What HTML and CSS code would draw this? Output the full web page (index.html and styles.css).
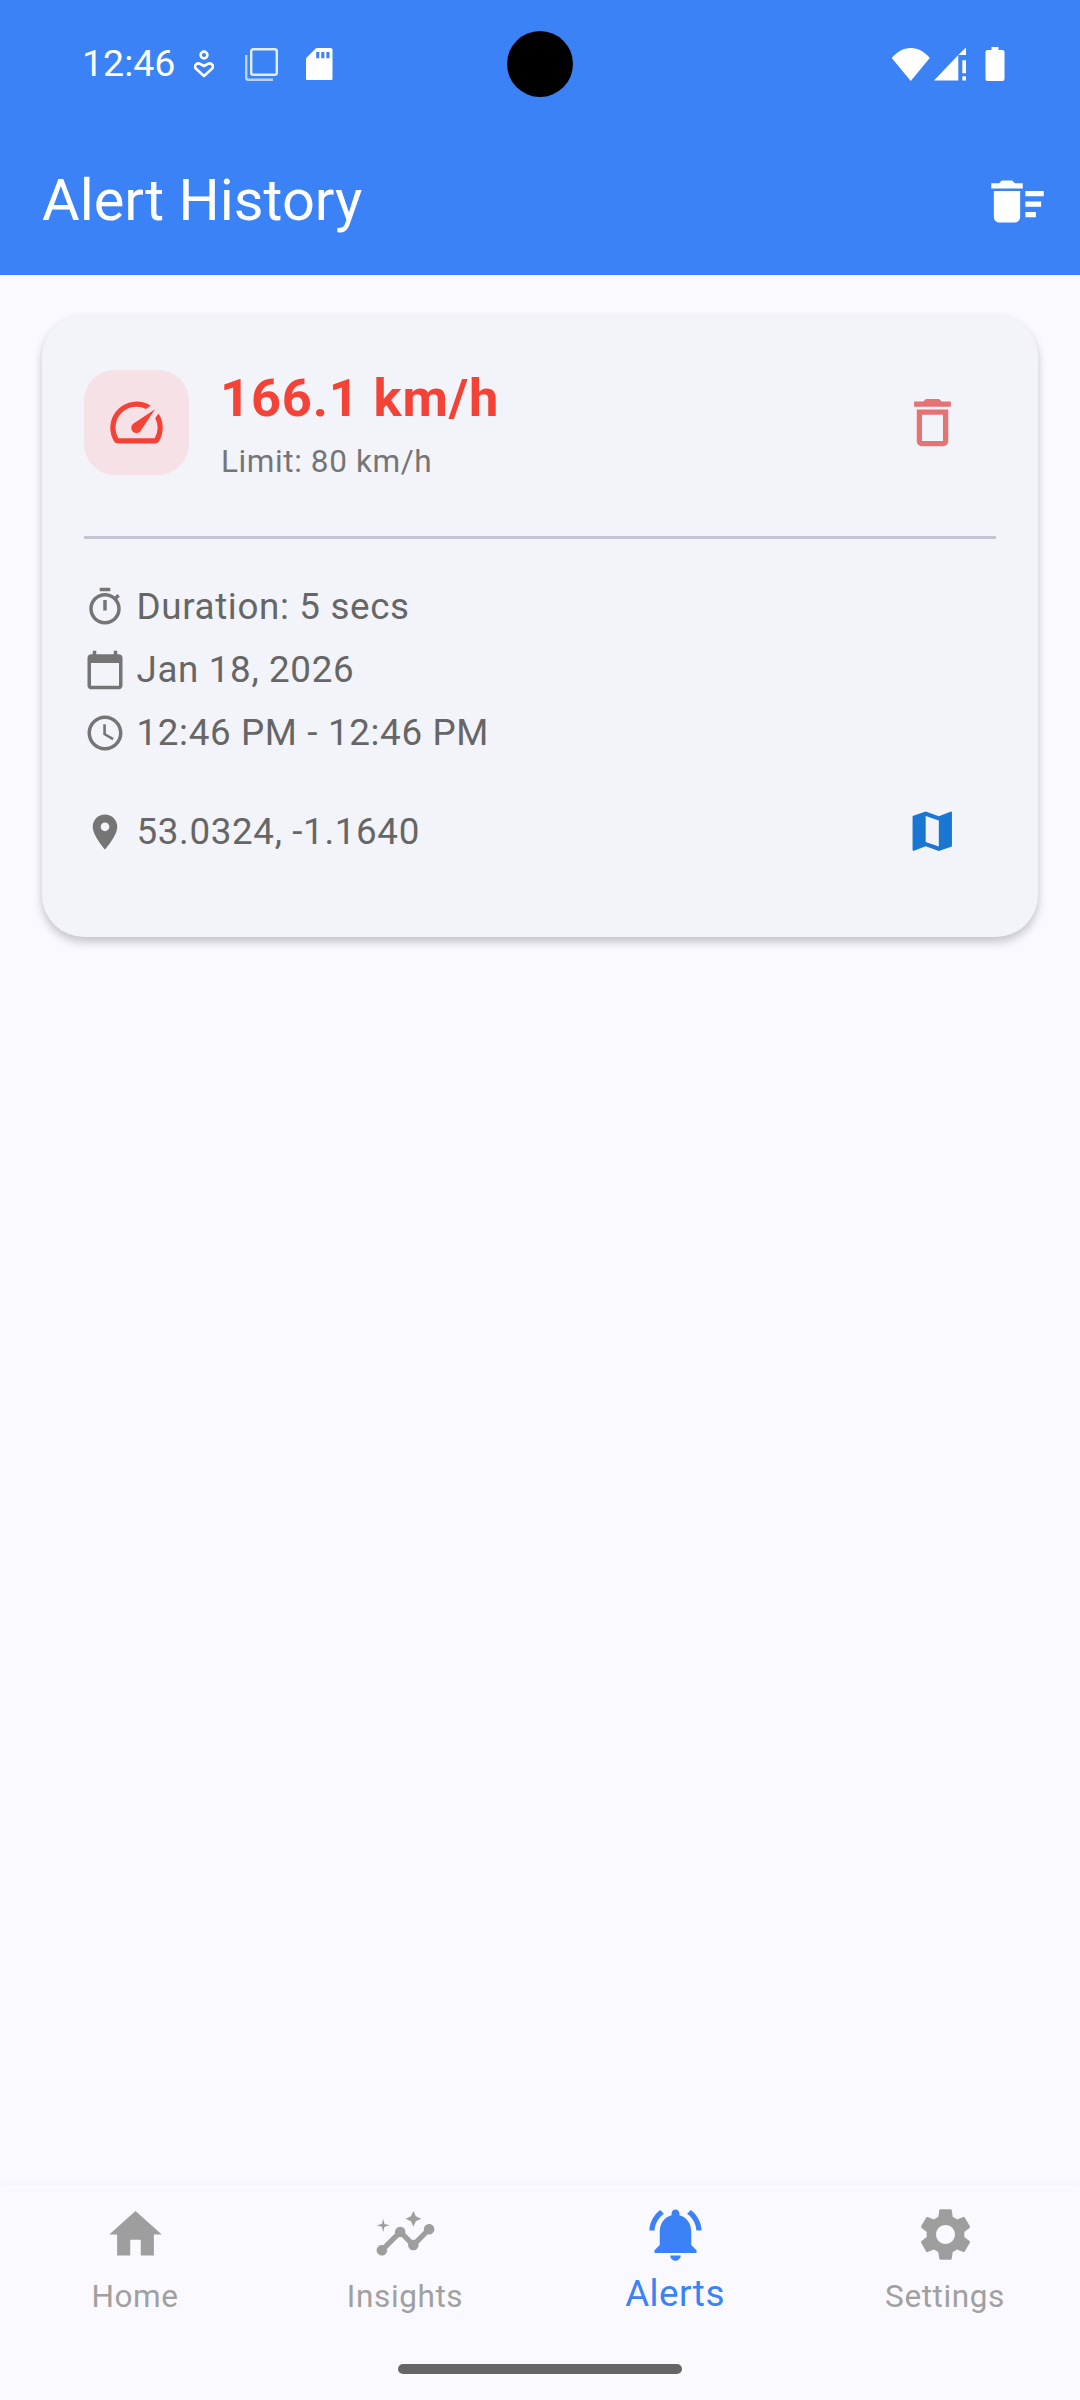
FILE: index.html
```html
<!DOCTYPE html>
<html lang="en">
<head>
<meta charset="utf-8">
<title>Alert History</title>
<link rel="stylesheet" href="styles.css">
</head>
<body>
<div class="screen">
  <header class="header">
    <div class="status">
      <span class="clock">12:46</span>
      <svg class="st st-pin" viewBox="0 0 20 28"><circle cx="10" cy="5" r="3.4" fill="none" stroke="#fff" stroke-width="2.600"/><path d="M10 26 1.800 18.500c-2-2.200.6-6 3.800-4.800L10 16l4.400-2.300c3.200-1.200 5.800 2.600 3.800 4.800z" fill="none" stroke="#fff" stroke-width="2.600" stroke-linejoin="round"/></svg>
      <svg class="st st-copy" viewBox="0 0 33 33"><rect x="6.2" y="1.2" width="25.600" height="25.600" rx="2" fill="none" stroke="#fff" stroke-opacity=".85" stroke-width="2.400"/><path d="M1.200 7v22.800a2 2 0 0 0 2 2H28" fill="none" stroke="#fff" stroke-opacity=".65" stroke-width="2.400"/></svg>
      <svg class="st st-sd" viewBox="0 0 26 32"><path d="M10 0h14a2 2 0 0 1 2 2v28a2 2 0 0 1-2 2H2a2 2 0 0 1-2-2V10z" fill="#fff"/><path d="M10 4h3v6h-3zM15 4h3v6h-3zM20 4h3v6h-3z" fill="#3b82f6"/></svg>
      <span class="status-fill"></span>
      <svg class="st st-wifi" viewBox="0 0 38 33"><path d="M19 33 0 10C5 4 11.500 0 19 0s14 4 19 10z" fill="#fff"/></svg>
      <svg class="st st-signal" viewBox="0 0 32 33"><path d="M24 8v25H0z M32 0v8h-8z" fill="#fff"/><path d="M28 13h4v13h-4zM28 29h4v4h-4z" fill="#fff"/></svg>
      <svg class="st st-batt" viewBox="0 0 19 34"><path d="M6 0h7v3h4a2 2 0 0 1 2 2v27a2 2 0 0 1-2 2H2a2 2 0 0 1-2-2V5a2 2 0 0 1 2-2h4z" fill="#fff"/></svg>
    </div>
    <div class="appbar">
      <h1 class="title">Alert History</h1>
      <svg class="bar-action" viewBox="0 0 24 24"><path d="M15 16h4v2h-4zm0-8h7v2h-7zm0 4h6v2h-6zM3 18c0 1.100.9 2 2 2h6c1.100 0 2-.9 2-2V8H3v10zM14 5h-3l-1-1H6L5 5H2v2h12z"/></svg>
    </div>
    <div class="camera"></div>
  </header>

  <main class="main">
    <section class="card">
      <div class="card-top">
        <div class="speed-box">
          <svg class="speed-icon" viewBox="0 0 24 24"><path d="M20.380 8.570l-1.230 1.850a8 8 0 0 1-.22 7.580H5.070A8 8 0 0 1 15.580 6.850l1.850-1.230A10 10 0 0 0 3.350 19a2 2 0 0 0 1.720 1h13.850a2 2 0 0 0 1.740-1 10 10 0 0 0-.27-10.440zm-9.790 6.840a2 2 0 0 0 2.830 0l5.660-8.490-8.490 5.660a2 2 0 0 0 0 2.830z"/></svg>
        </div>
        <div class="speed-text">
          <div class="speed">166.1 km/h</div>
          <div class="limit">Limit: 80 km/h</div>
        </div>
        <div class="btn">
          <svg class="trash" viewBox="0 0 24 24"><path d="M6 19c0 1.100.9 2 2 2h8c1.100 0 2-.9 2-2V7H6v12zM8 9h8v10H8V9zm7.500-5l-1-1h-5l-1 1H5v2h14V4z"/></svg>
        </div>
      </div>
      <div class="divider"></div>
      <div class="details">
        <div class="row">
          <svg class="row-icon" viewBox="0 0 24 24"><path d="M15 1H9v2h6V1zm-4 13h2V8h-2v6zm8.030-6.610l1.420-1.420c-.43-.51-.9-.99-1.410-1.410l-1.420 1.420C16.070 4.740 14.120 4 12 4c-4.970 0-9 4.030-9 9s4.020 9 9 9 9-4.030 9-9c0-2.120-.74-4.070-1.970-5.610zM12 20c-3.870 0-7-3.130-7-7s3.130-7 7-7 7 3.130 7 7-3.130 7-7 7z"/></svg>
          <span>Duration: 5 secs</span>
        </div>
        <div class="row">
          <svg class="row-icon" viewBox="0 0 24 24"><path d="M20 3h-1V1h-2v2H7V1H5v2H4c-1.100 0-2 .9-2 2v16c0 1.100.9 2 2 2h16c1.100 0 2-.9 2-2V5c0-1.100-.9-2-2-2zm0 18H4V8h16v13z"/></svg>
          <span>Jan 18, 2026</span>
        </div>
        <div class="row">
          <svg class="row-icon" viewBox="0 0 24 24"><path d="M11.990 2C6.470 2 2 6.480 2 12s4.470 10 9.990 10C17.520 22 22 17.520 22 12S17.520 2 11.990 2zM12 20c-4.420 0-8-3.580-8-8s3.580-8 8-8 8 3.580 8 8-3.580 8-8 8zm.5-13H11v6l5.250 3.150.75-1.230-4.500-2.670z"/></svg>
          <span>12:46 PM - 12:46 PM</span>
        </div>
      </div>
      <div class="row loc">
        <svg class="row-icon" viewBox="0 0 24 24"><path d="M12 2C8.130 2 5 5.130 5 9c0 5.250 7 13 7 13s7-7.750 7-13c0-3.870-3.130-7-7-7zm0 9.500c-1.380 0-2.500-1.120-2.500-2.500s1.120-2.500 2.500-2.500 2.500 1.120 2.500 2.500-1.120 2.500-2.500 2.500z"/></svg>
        <span class="loc-text">53.0324, -1.1640</span>
        <div class="btn btn-map">
          <svg class="map" viewBox="0 0 24 24"><path d="M20.500 3l-.16.03L15 5.100 9 3 3.360 4.900c-.21.07-.36.25-.36.48V20.500c0 .28.22.5.5.5l.16-.03L9 18.900l6 2.100 5.640-1.900c.21-.07.36-.25.36-.48V3.500c0-.28-.22-.5-.5-.5zM15 19l-6-2.110V5l6 2.110V19z"/></svg>
        </div>
      </div>
    </section>
  </main>

  <nav class="nav">
    <div class="tabs">
      <div class="tab">
        <svg class="tab-icon" viewBox="0 0 24 24"><path d="M10 20v-6h4v6h5v-8h3L12 3 2 12h3v8z"/></svg>
        <span class="tab-label">Home</span>
      </div>
      <div class="tab">
        <svg class="tab-icon" viewBox="0 0 24 24"><path d="M21 8c-1.450 0-2.260 1.440-1.930 2.510l-3.550 3.560c-.3-.09-.74-.09-1.040 0l-2.550-2.550C12.270 10.450 11.460 9 10 9c-1.450 0-2.270 1.440-1.930 2.520l-4.560 4.550C2.440 15.740 1 16.550 1 18c0 1.100.9 2 2 2 1.450 0 2.260-1.440 1.930-2.510l4.550-4.560c.3.09.74.09 1.040 0l2.550 2.550C12.730 16.550 13.540 18 15 18c1.450 0 2.270-1.440 1.930-2.520l3.560-3.550c1.070.33 2.510-.48 2.510-1.930 0-1.100-.9-2-2-2z"/><path d="M15 9l.94-2.070L18 6l-2.060-.93L15 3l-.92 2.070L12 6l2.080.93zM3.500 11L4 9l2-.5L4 8l-.5-2L3 8l-2 .5L3 9z"/></svg>
        <span class="tab-label">Insights</span>
      </div>
      <div class="tab tab-active">
        <svg class="tab-icon" viewBox="0 0 24 24"><path d="M7.580 4.080L6.150 2.650C3.750 4.480 2.170 7.300 2.030 10.500h2c.15-2.650 1.510-4.970 3.550-6.420zm12.390 6.420h2c-.15-3.200-1.730-6.020-4.120-7.850l-1.420 1.430c2.020 1.450 3.390 3.770 3.540 6.420zM18 11c0-3.070-1.640-5.640-4.500-6.320V4c0-.83-.67-1.500-1.500-1.500s-1.500.67-1.500 1.500v.68C7.630 5.360 6 7.920 6 11v5l-2 2v1h16v-1l-2-2v-5zm-6 11c.14 0 .27-.01.4-.04.65-.14 1.180-.58 1.440-1.180.1-.24.15-.5.15-.78h-4c.01 1.100.9 2 2.010 2z"/></svg>
        <span class="tab-label">Alerts</span>
      </div>
      <div class="tab">
        <svg class="tab-icon" viewBox="0 0 24 24"><path d="M19.140 12.940c.04-.3.06-.61.06-.94 0-.32-.02-.64-.07-.94l2.030-1.580c.18-.14.23-.41.12-.61l-1.920-3.320c-.12-.22-.37-.29-.59-.22l-2.390.96c-.5-.38-1.030-.7-1.620-.94l-.36-2.540c-.04-.24-.24-.41-.48-.41h-3.840c-.24 0-.43.17-.47.41l-.36 2.540c-.59.24-1.130.57-1.620.94l-2.390-.96c-.22-.08-.47 0-.59.22L2.740 8.870c-.12.21-.08.47.12.61l2.030 1.580c-.05.3-.09.63-.09.94s.02.64.07.94l-2.030 1.580c-.18.14-.23.41-.12.61l1.920 3.320c.12.22.37.29.59.22l2.390-.96c.5.38 1.030.7 1.620.94l.36 2.540c.05.24.24.41.48.41h3.840c.24 0 .44-.17.47-.41l.36-2.540c.59-.24 1.130-.56 1.620-.94l2.390.96c.22.08.47 0 .59-.22l1.920-3.320c.12-.22.07-.47-.12-.61l-2.010-1.580zM12 15.600c-1.980 0-3.600-1.620-3.600-3.600s1.620-3.600 3.600-3.600 3.600 1.620 3.600 3.600-1.620 3.600-3.600 3.600z"/></svg>
        <span class="tab-label">Settings</span>
      </div>
    </div>
    <div class="home-bar"></div>
  </nav>
</div>
</body>
</html>
```

FILE: styles.css
```css
* { box-sizing: border-box; }
html, body { margin: 0; padding: 0; }
body { font-family: Roboto, "Liberation Sans", sans-serif; background: #faf9ff; }
svg { display: block; flex: none; }

.screen { width: 1080px; height: 2400px; display: flex; flex-direction: column; overflow: hidden; }

.header { position: relative; height: 275px; background: #3b82f6; color: #fff; flex: none; }
.status { height: 128px; padding-left: 82px; display: flex; align-items: center; }
.clock { font-size: 37.5px; line-height: 44px; width: 91px; margin-top: -2px; }
.st { height: auto; }
.st-pin { width: 20px; margin-left: 20.5px; }
.st-copy { width: 33px; margin-left: 31px; }
.st-sd { width: 26.5px; margin-left: 28.5px; }
.status-fill { flex: 1; }
.st-wifi { width: 39.5px; height: 33px; }
.st-signal { width: 32.4px; margin-left: 3px; }
.st-batt { width: 20px; height: 34px; margin-left: 19px; margin-right: 75px; }
.camera { position: absolute; left: 507px; top: 31px; width: 66px; height: 66px; border-radius: 50%; background: #000; }

.appbar { height: 147px; display: flex; align-items: center; justify-content: space-between; padding: 0 31px 0 42px; }
.title { margin: 0; font-size: 57.75px; font-weight: 400; line-height: 147px; margin-top: -2px; }
.bar-action { width: 63px; height: 63px; fill: #fff; margin-top: -1px; }

.main { flex: 1; padding: 40px 42px 0; }
.card { background: #f3f4fa; border-radius: 42px; padding: 55px 42px 74px; box-shadow: 0 5px 10px rgba(0, 0, 0, .22); height: 622px; }
.card-top { display: flex; align-items: center; height: 105px; }
.speed-box { width: 105px; height: 105px; border-radius: 31px; background: #f5e1e6; display: flex; align-items: center; justify-content: center; }
.speed-icon { width: 63px; height: 63px; fill: #f44336; }
.speed-text { flex: 1; margin-left: 32px; padding-top: 4.5px; }
.speed { font-size: 52.5px; font-weight: 700; color: #f44336; line-height: 60px; letter-spacing: .8px; margin-left: -1px; }
.limit { font-size: 31.5px; color: #757575; line-height: 40px; letter-spacing: .6px; margin-top: 13.5px; }
.btn { width: 126px; height: 105px; display: flex; align-items: center; justify-content: center; padding-right: 1px; }
.trash { width: 63px; height: 63px; fill: #e57373; }
.map { width: 52.5px; height: 52.5px; fill: #1976d2; }
.divider { height: 3px; background: #c4c5d3; margin-top: 61px; }
.details { margin-top: 36px; }
.row { height: 63px; display: flex; align-items: center; gap: 10.5px; font-size: 36.75px; color: #666; letter-spacing: .65px; }
.row-icon { width: 42px; height: 42px; fill: #757575; }
.loc { margin-top: 36px; }
.loc-text { flex: 1; }
.btn-map { height: 63px; }

.nav { height: 215px; flex: none; background: #faf9ff; box-shadow: 0 -3px 6px rgba(0, 0, 0, .015); display: flex; flex-direction: column; }
.tabs { display: grid; grid-template-columns: repeat(4, 1fr); padding-top: 18px; }
.tab { display: flex; flex-direction: column; align-items: center; color: #a0a0a0; fill: #9e9e9e; }
.tab-icon { width: 63px; height: 63px; }
.tab-label { font-size: 31.5px; line-height: 42px; letter-spacing: .6px; margin-top: 10px; }
.tab-active { color: #3b82f6; fill: #3b82f6; }
.tab-active .tab-label { font-size: 36.75px; margin-top: 7px; letter-spacing: .5px; }
.home-bar { width: 284px; height: 10px; border-radius: 5px; background: #666; margin: 46px auto 0; }
```
